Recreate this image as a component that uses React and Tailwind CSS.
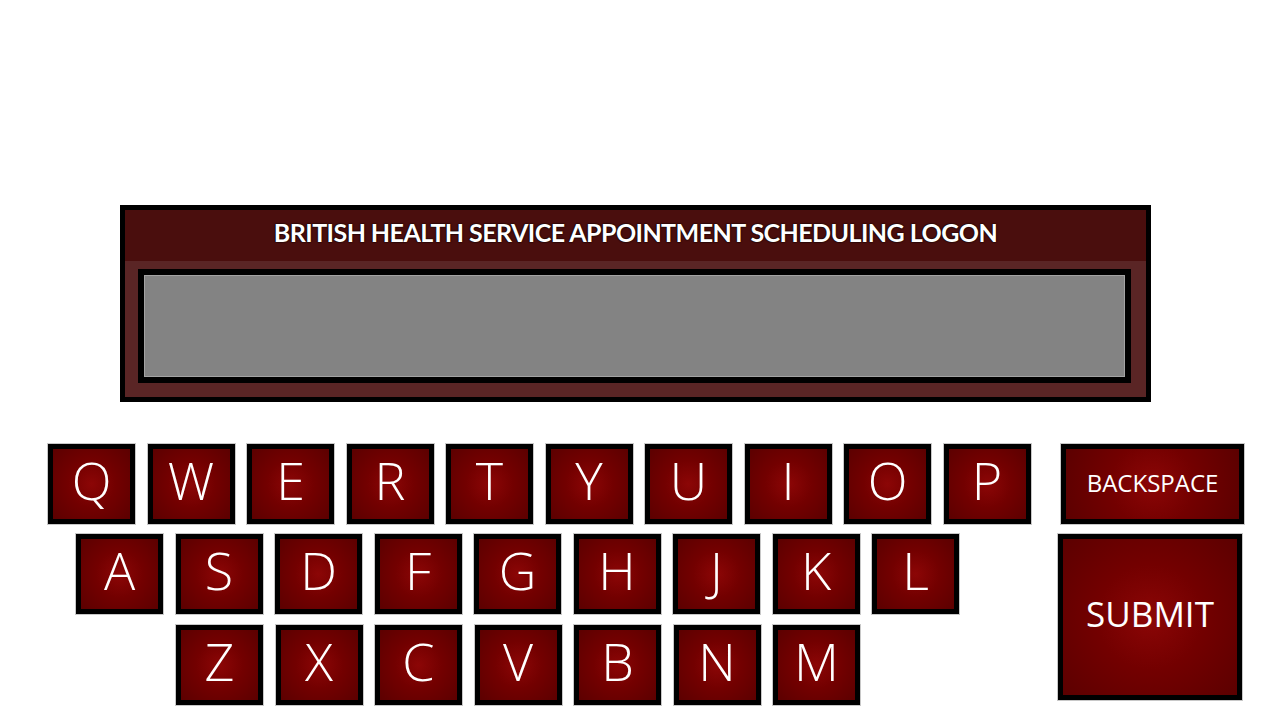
import React from "react";

const rows = [
  { keys: "QWERTYUIOP".split(""), pad: "pl-[48px]", top: "mt-[42px]" },
  { keys: "ASDFGHJKL".split(""), pad: "pl-[76px]", top: "mt-[10px]" },
  { keys: "ZXCVBNM".split(""), pad: "pl-[176px]", top: "mt-[11px]" },
];

const keyFace =
  "border-[5px] border-black bg-[radial-gradient(circle_at_center,#8c0606_0%,#730000_45%,#5c0000_100%)] text-white flex items-center justify-center shadow-[0_0_0_1px_#c8c8c8]";

function Key({ label }) {
  return (
    <div
      className={`${keyFace} w-[87px] h-[80px] text-[52px] leading-none font-[Open_Sans,sans-serif] font-[350]`}
    >
      <span className="-mt-[9px]">{label}</span>
    </div>
  );
}

export default function App() {
  return (
    <div className="w-[1280px] h-[720px] bg-white overflow-hidden pt-[205px]">
      {/* logon panel */}
      <div className="ml-[120px] w-[1031px] h-[197px] border-[5px] border-black bg-[#5a2525] flex flex-col">
        <div className="h-[51px] bg-[#4a0e0d] flex items-center justify-center pb-[5px]">
          <h1 className="text-white font-bold text-[25px] tracking-[-0.55px] font-[Lato,sans-serif] [text-shadow:0_0_2px_#000,0_0_1px_#000]">
            BRITISH HEALTH SERVICE APPOINTMENT SCHEDULING LOGON
          </h1>
        </div>
        <div className="pl-[13px] pr-[15px] pt-[8px]">
          <div className="h-[114px] border-[6px] border-black bg-black">
            <div className="w-full h-full bg-[#838383] border border-[#a3a3a3]" />
          </div>
        </div>
      </div>

      {/* keyboard */}
      <div className="flex">
        <div className="w-[1031px] flex flex-col">
          {rows.map((row, i) => (
            <div key={i} className={`flex gap-[12.5px] ${row.pad} ${row.top}`}>
              {row.keys.map((k) => (
                <Key key={k} label={k} />
              ))}
            </div>
          ))}
        </div>
        <div className="flex flex-col pt-[42px]">
          <div
            className={`${keyFace} ml-[30px] w-[183px] h-[80px] text-[24px] font-[Open_Sans,sans-serif]`}
          >
            <span className="-mt-[2px]">BACKSPACE</span>
          </div>
          <div
            className={`${keyFace} ml-[27px] mt-[10px] w-[184px] h-[166px] text-[35px] font-[Open_Sans,sans-serif]`}
          >
            <span className="-mt-[5px]">SUBMIT</span>
          </div>
        </div>
      </div>
    </div>
  );
}
